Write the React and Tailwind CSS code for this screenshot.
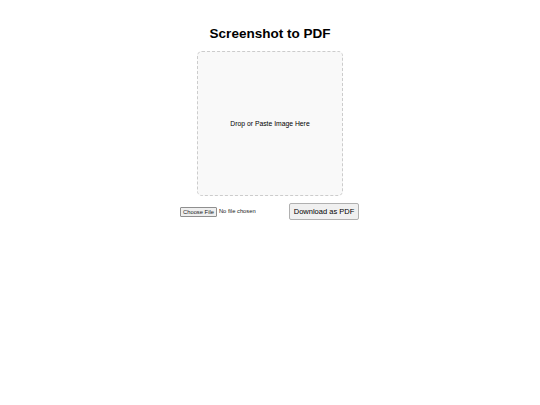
export default function App() {
  return (
    <div className="w-[540px] h-[405px] bg-white flex flex-col items-center" style={{ fontFamily: '"Liberation Sans", Arial, sans-serif' }}>
      <h1 className="mt-[26px] text-[13.5px] leading-[16px] font-bold text-black">Screenshot to PDF</h1>
      <div className="mt-[9px] w-[146px] h-[145px] border border-dashed border-[#cccccc] rounded-[5px] bg-[#f9f9f9] flex items-center justify-center pt-[2px]">
        <span className="text-[6.8px] text-black">Drop or Paste Image Here</span>
      </div>
      <div className="mt-[7px] w-[179px] flex items-center justify-between ml-[-1px]">
        <div className="flex items-center gap-[2px]">
          <span className="h-[10px] px-[2px] border border-[#8f8f8f] bg-[#efefef] rounded-[1px] text-[5.8px] leading-[8px] text-[#222] flex items-center">Choose File</span>
          <span className="text-[5.8px] text-[#222]">No file chosen</span>
        </div>
        <button className="h-[17px] w-[70px] border border-[#b0b0b0] bg-[#f0f0f0] rounded-[2px] text-[7.5px] text-black flex items-center justify-center">Download as PDF</button>
      </div>
    </div>
  );
}
